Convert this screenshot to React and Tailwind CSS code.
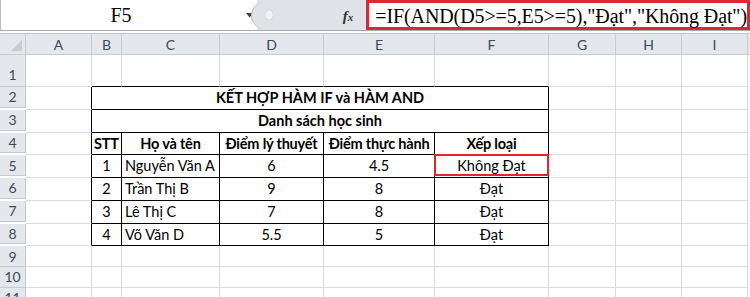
const cols = [
  ['A', 66],
  ['B', 30],
  ['C', 98],
  ['D', 104],
  ['E', 111],
  ['F', 114],
  ['G', 67],
  ['H', 66],
  ['I', 66],
];

const people = [
  ['1', 'Nguyễn Văn A', '6', '4.5', 'Không Đạt'],
  ['2', 'Trần Thị B', '9', '8', 'Đạt'],
  ['3', 'Lê Thị C', '7', '8', 'Đạt'],
  ['4', 'Võ Văn D', '5.5', '5', 'Đạt'],
];

const font = { fontFamily: 'Lato, "Open Sans", sans-serif' };
const serif = { fontFamily: '"Liberation Serif", serif' };

function RowHead({ n, tall }) {
  return (
    <div
      className={`flex w-[26px] shrink-0 items-center justify-center border-r border-b border-[#c5cad1] bg-[#e4e7eb] text-[14px] text-[#3b4a5c] ${tall ? 'h-[32px] pt-2' : 'h-[20.8px]'}`}
    >
      {n}
    </div>
  );
}

function Cell({ w, className = '', children }) {
  return (
    <div style={{ width: w }} className={`flex shrink-0 items-center border-r border-b border-[#dadcdf] ${className}`}>
      {children}
    </div>
  );
}

function EmptyTail({ from }) {
  return cols.slice(from).map(([k, w]) => <Cell key={k} w={w} />);
}

export default function App() {
  return (
    <div className="h-[297px] w-[750px] overflow-hidden bg-white" style={font}>
      {/* formula bar */}
      <div className="flex h-[31px] border-b border-[#a7abb0] bg-[#dfe2e6]">
        <div className="relative flex w-[258px] items-center border-l border-[#b9bdc2] bg-white">
          <span className="w-[240px] text-center text-[20px] text-black" style={serif}>F5</span>
          <svg className="absolute left-[245px] top-[13px]" width="7" height="5" viewBox="0 0 7 5">
            <path d="M0 0h7L3.5 4.5z" fill="#444" />
          </svg>
        </div>
        <div className="relative flex w-[110px] items-center">
          <div className="absolute -left-[6px] top-[2px] h-[27px] w-[24px] rounded-l-full border-l border-[#b0b4b9] bg-[#dfe2e6]" />
          <div className="absolute left-[8px] top-[10px] h-[10px] w-[8px] rounded-full bg-[#f1f2f4] shadow-[inset_0_0_1px_#999]" />
          <span className="absolute left-[86px] top-[5px] text-[15px] font-bold italic text-[#333]" style={serif}>
            f<span className="text-[11px]">x</span>
          </span>
        </div>
        <div className="flex flex-1 items-center border-[3px] border-[#e2262e] bg-white pl-[6px] pt-[1px]">
          <span className="whitespace-nowrap text-[20px] tracking-[-0.1px] text-black" style={serif}>
            =IF(AND(D5&gt;=5,E5&gt;=5),"Đạt","Không Đạt")
          </span>
        </div>
      </div>
      <div className="h-[3px] border-b border-[#c2c6cb] bg-white" />

      {/* column headers */}
      <div className="flex h-[21px]">
        <div className="relative w-[26px] shrink-0 border-r border-b border-[#c5cad1] bg-[#e4e7eb]">
          <svg className="absolute right-[3px] bottom-[3px]" width="11" height="11" viewBox="0 0 11 11">
            <path d="M11 0V11H0z" fill="#c9ccd0" />
          </svg>
        </div>
        {cols.map(([k, w]) => (
          <div
            key={k}
            style={{ width: w }}
            className="flex shrink-0 items-center justify-center border-r border-b border-[#c5cad1] bg-[#e4e7eb] text-[14px] text-[#3b4a5c]"
          >
            {k}
          </div>
        ))}
        <div className="flex-1 border-b border-[#c5cad1] bg-[#e4e7eb]" />
      </div>

      {/* row 1 */}
      <div className="flex">
        <RowHead n="1" tall />
        <Cell w={66} />
        <Cell w={30} className="border-b-black" />
        <Cell w={98} className="border-b-black" />
        <Cell w={104} className="border-b-black" />
        <Cell w={111} className="border-b-black" />
        <Cell w={114} className="border-b-black" />
        <EmptyTail from={6} />
      </div>

      {/* rows 2-3 merged */}
      {['KẾT HỢP HÀM IF và HÀM AND', 'Danh sách học sinh'].map((t, i) => (
        <div key={t} className="flex">
          <RowHead n={i + 2} />
          <Cell w={66} className="border-r-black" />
          <Cell w={457} className="justify-center border-r-black border-b-black text-[14.5px] font-bold text-black">
            {t}
          </Cell>
          <EmptyTail from={6} />
        </div>
      ))}

      {/* row 4 headers */}
      <div className="flex">
        <RowHead n="4" />
        <Cell w={66} className="border-r-black" />
        {[['STT', 30], ['Họ và tên', 98], ['Điểm lý thuyết', 104], ['Điểm thực hành', 111], ['Xếp loại', 114]].map(([t, w]) => (
          <Cell key={t} w={w} className="justify-center border-r-black border-b-black whitespace-nowrap text-[14.5px] font-bold tracking-[-0.2px] text-black">
            {t}
          </Cell>
        ))}
        <EmptyTail from={6} />
      </div>

      {/* data rows */}
      {people.map((p, i) => (
        <div key={p[0]} className="flex">
          <RowHead n={i + 5} />
          <Cell w={66} className="border-r-black" />
          <Cell w={30} className="justify-center border-r-black border-b-black text-[14.5px] text-black">{p[0]}</Cell>
          <Cell w={98} className="border-r-black border-b-black pl-[3px] whitespace-nowrap text-[14.5px] text-black">{p[1]}</Cell>
          <Cell w={104} className="justify-center border-r-black border-b-black text-[14.5px] text-black">{p[2]}</Cell>
          <Cell w={111} className="justify-center border-r-black border-b-black text-[14.5px] text-black">{p[3]}</Cell>
          <Cell w={114} className="relative justify-center border-r-black border-b-black text-[14.5px] text-black">
            {p[4]}
            {i === 0 && <div className="absolute -top-[1px] -left-[1px] h-[22px] w-[115px] border-[2px] border-[#e2262e]" />}
          </Cell>
          <EmptyTail from={6} />
        </div>
      ))}

      {/* empty rows */}
      {[9, 10, 11].map((n) => (
        <div key={n} className="flex">
          <RowHead n={n} />
          <EmptyTail from={0} />
        </div>
      ))}
    </div>
  );
}
